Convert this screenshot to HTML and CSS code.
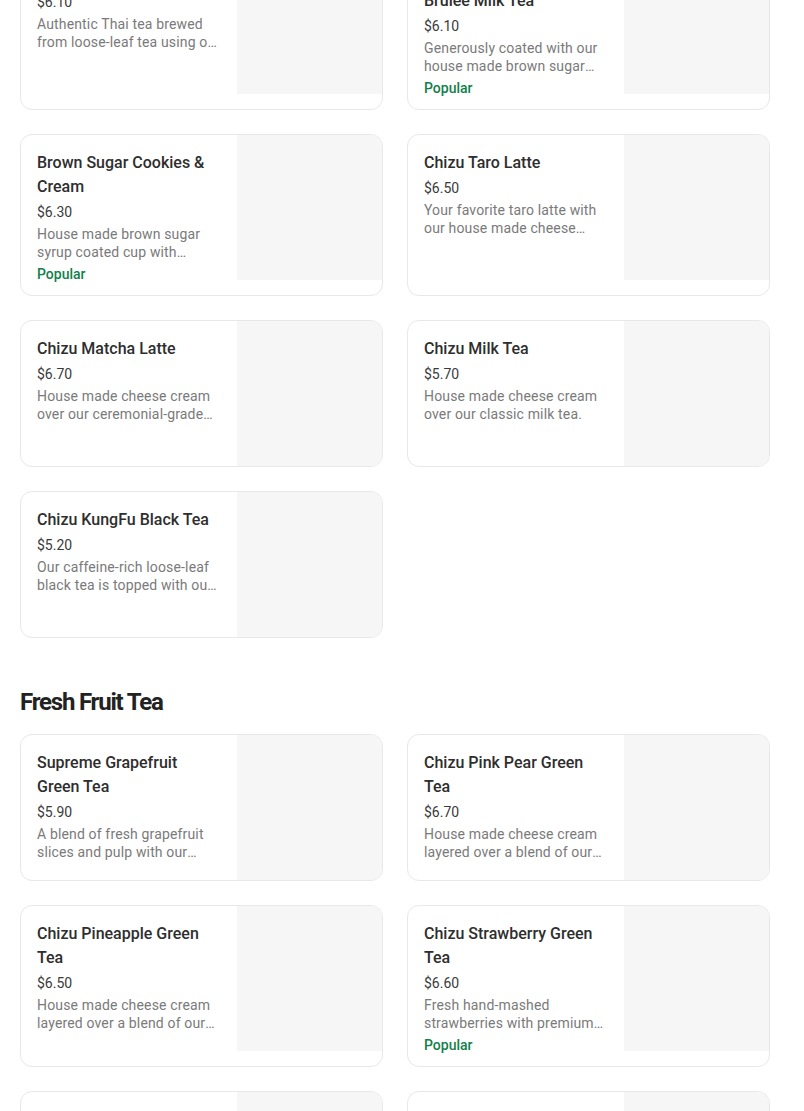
FILE: index.html
```html
<!DOCTYPE html>
<html lang="en">
<head>
<meta charset="utf-8">
<title>Menu</title>
<link rel="stylesheet" href="styles.css">
</head>
<body>
<main class="menu">
  <section class="section section-first">
    <div class="grid">
      <article class="card">
        <div class="info">
          <h3 class="title">Thai Milk Tea</h3>
          <div class="price">$6.10</div>
          <p class="desc">Authentic Thai tea brewed from loose-leaf tea using our house recipe and fresh milk.</p>
        </div>
        <div class="thumb"></div>
      </article>
      <article class="card">
        <div class="info">
          <h3 class="title">Brown Sugar Crème<br>Brulee Milk Tea</h3>
          <div class="price">$6.10</div>
          <p class="desc">Generously coated with our house made brown sugar syrup and topped with crème brulee.</p>
          <div class="tag">Popular</div>
        </div>
        <div class="thumb"></div>
      </article>
      <article class="card">
        <div class="info">
          <h3 class="title">Brown Sugar Cookies &amp; Cream</h3>
          <div class="price">$6.30</div>
          <p class="desc">House made brown sugar syrup coated cup with crushed cookies and fresh milk.</p>
          <div class="tag">Popular</div>
        </div>
        <div class="thumb"></div>
      </article>
      <article class="card">
        <div class="info">
          <h3 class="title">Chizu Taro Latte</h3>
          <div class="price">$6.50</div>
          <p class="desc">Your favorite taro latte with our house made cheese cream.</p>
        </div>
        <div class="thumb"></div>
      </article>
      <article class="card">
        <div class="info">
          <h3 class="title">Chizu Matcha Latte</h3>
          <div class="price">$6.70</div>
          <p class="desc">House made cheese cream over our ceremonial-grade matcha latte.</p>
        </div>
        <div class="thumb"></div>
      </article>
      <article class="card">
        <div class="info">
          <h3 class="title">Chizu Milk Tea</h3>
          <div class="price">$5.70</div>
          <p class="desc">House made cheese cream over our classic milk tea.</p>
        </div>
        <div class="thumb"></div>
      </article>
      <article class="card">
        <div class="info">
          <h3 class="title">Chizu KungFu Black Tea</h3>
          <div class="price">$5.20</div>
          <p class="desc">Our caffeine-rich loose-leaf black tea is topped with our house made cheese cream.</p>
        </div>
        <div class="thumb"></div>
      </article>
    </div>
  </section>

  <section class="section">
    <h2 class="section-title">Fresh Fruit Tea</h2>
    <div class="grid">
      <article class="card">
        <div class="info">
          <h3 class="title">Supreme Grapefruit Green Tea</h3>
          <div class="price">$5.90</div>
          <p class="desc">A blend of fresh grapefruit slices and pulp with our premium green tea.</p>
        </div>
        <div class="thumb"></div>
      </article>
      <article class="card">
        <div class="info">
          <h3 class="title">Chizu Pink Pear Green Tea</h3>
          <div class="price">$6.70</div>
          <p class="desc">House made cheese cream layered over a blend of our pink pear green tea.</p>
        </div>
        <div class="thumb"></div>
      </article>
      <article class="card">
        <div class="info">
          <h3 class="title">Chizu Pineapple Green Tea</h3>
          <div class="price">$6.50</div>
          <p class="desc">House made cheese cream layered over a blend of our pineapple green tea.</p>
        </div>
        <div class="thumb"></div>
      </article>
      <article class="card">
        <div class="info">
          <h3 class="title">Chizu Strawberry Green Tea</h3>
          <div class="price">$6.60</div>
          <p class="desc">Fresh hand-mashed strawberries with premium green tea and cheese cream.</p>
          <div class="tag">Popular</div>
        </div>
        <div class="thumb"></div>
      </article>
      <article class="card">
        <div class="info">
          <h3 class="title">Supreme Mango Green Tea</h3>
          <div class="price">$6.20</div>
          <p class="desc">Fresh mango blended with our premium green tea.</p>
        </div>
        <div class="thumb"></div>
      </article>
      <article class="card">
        <div class="info">
          <h3 class="title">Supreme Passion Fruit Tea</h3>
          <div class="price">$5.90</div>
          <p class="desc">Passion fruit pulp with our premium green tea.</p>
        </div>
        <div class="thumb"></div>
      </article>
    </div>
  </section>
</main>
</body>
</html>
```

FILE: styles.css
```css
* {
  box-sizing: border-box;
}

html, body {
  margin: 0;
  padding: 0;
  background: #ffffff;
}

body {
  font-family: Roboto, "Liberation Sans", Arial, sans-serif;
  color: #222222;
  -webkit-font-smoothing: antialiased;
}

.menu {
  padding: 0 34px 40px 20px;
  margin-top: -52px;
}

.section + .section {
  margin-top: 48px;
}

.section-title {
  margin: 0 0 16px;
  font-size: 24px;
  line-height: 32px;
  font-weight: 700;
  letter-spacing: -1.2px;
  color: #222222;
}

.grid {
  display: grid;
  grid-template-columns: 1fr 1fr;
  gap: 24px;
}

.card {
  display: flex;
  align-items: flex-start;
  min-height: 147px;
  border: 1px solid #e8e8e8;
  border-radius: 12px;
  overflow: hidden;
  background: #ffffff;
}

.info {
  flex: 1;
  min-width: 0;
  padding: 16px 16px 11px;
}

.title {
  margin: 0;
  font-size: 16px;
  line-height: 24px;
  font-weight: 500;
  color: #2e2e2e;
}

.price {
  margin-top: 3px;
  font-size: 14px;
  line-height: 20px;
  color: #3a3a3a;
}

.desc {
  margin: 3px 0 0;
  font-size: 14px;
  line-height: 18px;
  letter-spacing: 0.15px;
  color: #7a7a7a;
  display: -webkit-box;
  -webkit-line-clamp: 2;
  -webkit-box-orient: vertical;
  overflow: hidden;
}

.tag {
  margin-top: 3px;
  font-size: 14px;
  line-height: 20px;
  font-weight: 500;
  color: #12804a;
}

.thumb {
  flex: none;
  width: 145px;
  height: 145px;
  background: #f6f6f6;
}
```
